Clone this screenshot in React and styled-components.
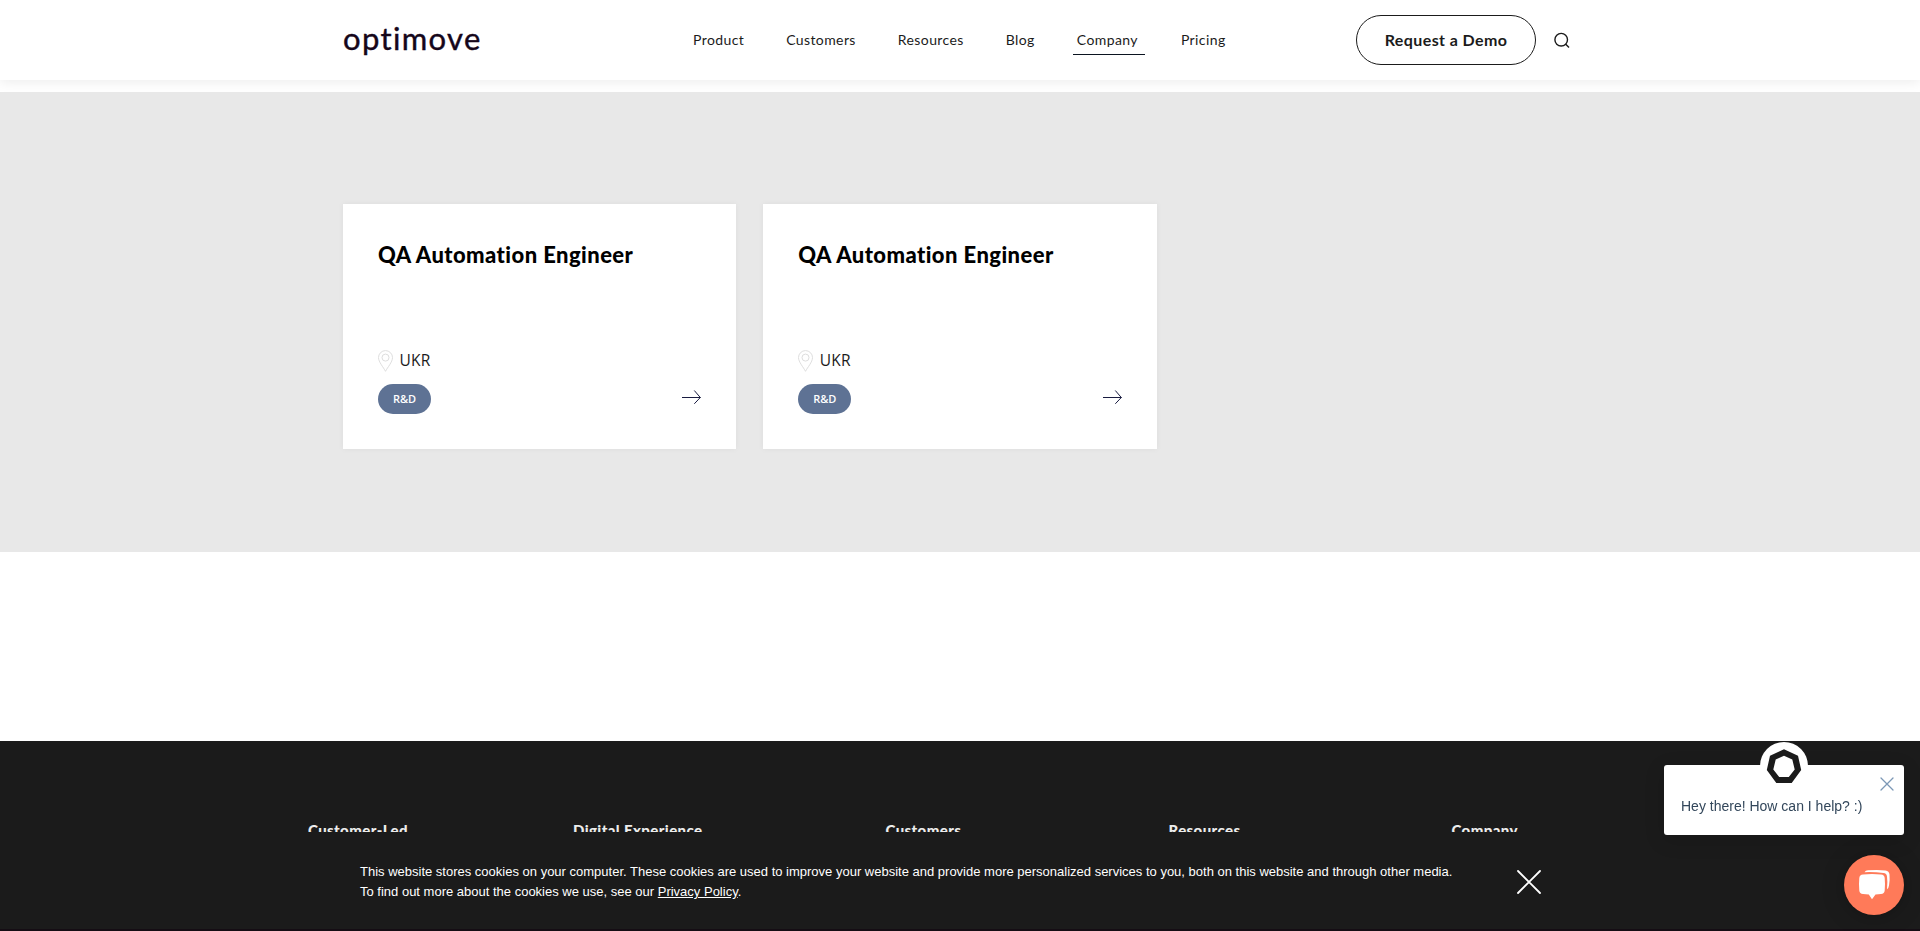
import React from "react";
import styled, { createGlobalStyle } from "styled-components";

const Global = createGlobalStyle`
  *, *::before, *::after { box-sizing: border-box; }
  html, body { margin: 0; padding: 0; overflow: hidden; }
  body { background: #fff; font-family: Lato, "Liberation Sans", sans-serif; color: #1b1b1b; }
  a { color: inherit; text-decoration: none; }
  button { font: inherit; color: inherit; background: none; border: 0; padding: 0; }
  h2, h3, p { margin: 0; }
  svg { display: block; flex: none; }
`;

const Page = styled.div`
  height: 931px;
  overflow: hidden;
  display: flex;
  flex-direction: column;
`;

const Header = styled.header`
  flex: none;
  height: 80px;
  margin-bottom: 12px;
  padding: 0 343px;
  display: flex;
  align-items: center;
  background: #fff;
  box-shadow: 0 2px 12px rgba(0, 0, 0, 0.08);
`;

const Logo = styled.a`
  width: 346px;
  padding-bottom: 4px;
  font-size: 31px;
  line-height: 40px;
  letter-spacing: 1.35px;
  color: #15061a;
  -webkit-text-stroke: 0.4px #15061a;
`;

const Nav = styled.nav`
  flex: 1;
  display: flex;
  gap: 34px;
`;

const NavLink = styled.a`
  padding: 0 ${(p) => (p.$active ? 7 : 4)}px 0 4px;
  margin-right: ${(p) => (p.$active ? -2 : 0)}px;
  height: 30px;
  line-height: 29px;
  font-size: 14px;
  letter-spacing: 0.4px;
  border-bottom: 1px solid ${(p) => (p.$active ? "#0b1420" : "transparent")};
  white-space: nowrap;
`;

const DemoButton = styled.button`
  width: 180px;
  height: 50px;
  padding-bottom: 2px;
  border: 1px solid #1b1b1b;
  border-radius: 25px;
  font-size: 16px;
  font-weight: 700;
  letter-spacing: 0.4px;
  margin-right: 18px;
`;

const SearchButton = styled.button`
  width: 23px;
`;

const Jobs = styled.main`
  flex: none;
  height: 460px;
  padding: 112px 343px 0;
  background: #e8e8e8;
  display: grid;
  grid-template-columns: repeat(3, 1fr);
  grid-template-rows: 245px;
  column-gap: 27px;
`;

const Card = styled.article`
  padding: 35px;
  background: #fff;
  box-shadow: 0 0 6px rgba(0, 0, 0, 0.05);
  display: flex;
  flex-direction: column;
`;

const JobTitle = styled.h2`
  font-size: 22px;
  line-height: 32px;
  font-weight: 900;
  letter-spacing: 0.43px;
  color: #000;
  flex: 1;
`;

const Place = styled.div`
  display: flex;
  align-items: center;
  gap: 6.5px;
  height: 22px;
  margin-bottom: 12px;
  font-family: "Open Sans", sans-serif;
  font-size: 15.5px;
  line-height: 20px;
`;

const PlaceName = styled.span`
  padding-bottom: 2px;
  letter-spacing: 0.2px;
`;

const CardFoot = styled.div`
  display: flex;
  justify-content: space-between;
  height: 30px;
`;

const Tag = styled.span`
  width: 53px;
  height: 30px;
  border-radius: 15px;
  background: #5e7294;
  color: #fff;
  font-family: "Open Sans", sans-serif;
  font-size: 11px;
  font-weight: 600;
  line-height: 30px;
  text-align: center;
`;

const Arrow = styled.a`
  padding-top: 6px;
`;

const Footer = styled.footer`
  flex: 1;
  margin-top: 189px;
  padding: 79px 0 0 308px;
  background: #1b1b1b;
  display: flex;
`;

const FooterHeading = styled.h3`
  flex: none;
  width: ${(p) => p.$width}px;
  color: #ececec;
  font-size: 15px;
  font-weight: 900;
  line-height: 20px;
  letter-spacing: 0.4px;
  white-space: nowrap;
`;

const CookieBar = styled.section`
  position: fixed;
  inset: auto 0 0 0;
  height: 99px;
  padding: 30px 379px 0 360px;
  display: flex;
  justify-content: space-between;
  background: #1b1b1b;
  border-bottom: 2px solid #150d14;
  color: #fff;
  font: 13px/20px "Liberation Sans", Arial, sans-serif;
`;

const CookieLine = styled.p`
  white-space: nowrap;
  a { text-decoration: underline; }
`;

const CookieClose = styled.button`
  height: 23px;
  margin-top: 8px;
`;

const ChatPopup = styled.aside`
  position: fixed;
  right: 16px;
  bottom: 96px;
  width: 240px;
  height: 70px;
  padding: 31px 17px 0;
  border-radius: 3px;
  background: #fff;
  color: #33475b;
  font: 14px/20px "Liberation Sans", Arial, sans-serif;
  box-shadow: 0 5px 20px rgba(0, 0, 0, 0.15);
`;

const Avatar = styled.span`
  position: absolute;
  left: 96px;
  top: -23px;
  width: 48px;
  height: 48px;
  border-radius: 50%;
  background: #fff;
`;

const PopupClose = styled.button`
  position: absolute;
  right: 10.5px;
  top: 11.5px;
`;

const ChatButton = styled.button`
  position: fixed;
  right: 16px;
  bottom: 16px;
  width: 60px;
  height: 60px;
  border-radius: 50%;
  background: #ff7a59;
  box-shadow: 0 1px 6px rgba(0, 0, 0, 0.1), 0 2px 24px rgba(0, 0, 0, 0.2);
`;

const Cross = ({ size, color, width }) => (
  <svg width={size} height={size} viewBox={`0 0 ${size} ${size}`} stroke={color} strokeWidth={width} strokeLinecap="round">
    <path d={`M1 1L${size - 1} ${size - 1}M${size - 1} 1L1 ${size - 1}`} />
  </svg>
);

const SearchIcon = () => (
  <svg width="16" height="16" viewBox="0 0 16 16" fill="none" stroke="#1b1b1b" strokeWidth="1.4">
    <circle cx="7.2" cy="7.7" r="6.3" />
    <path d="M11.5 12L15 15.500" />
  </svg>
);

const PinIcon = () => (
  <svg width="15" height="22" viewBox="0 0 15 22" fill="none" stroke="#dedede">
    <path d="M7.5 21.3C5.5 17.4 .5 12 .5 7.6a7 7 0 0 1 14 0c0 4.4-5 9.8-7 13.7z" />
    <circle cx="7.5" cy="7.6" r="3.5" />
  </svg>
);

const ArrowIcon = () => (
  <svg width="19" height="14" viewBox="0 0 19 14" fill="none" stroke="#191c40">
    <path d="M0 7.500h18.500M12.300 .5l6 7L12.300 13.800" />
  </svg>
);

const HeptagonIcon = () => (
  <svg width="48" height="48" viewBox="0 0 48 48" fill="#1b1b1b" fillRule="evenodd">
    <path d="M24 7.300L38 13.700L41.200 28L31.700 41H16.300L6.800 28L10 13.700zM24 13.800L15.700 17.500L13.300 27.500L19.200 35H28.800L34.700 27.500L32.300 17.500z" />
  </svg>
);

const ChatIcon = () => (
  <svg width="60" height="60" viewBox="0 0 60 60" fill="#fff">
    <path d="M19 19.5Q28 18.6 37 19.5Q40.400 19.800 40.700 23Q41.300 29 40.700 35.500Q40.400 38.600 37 39L31.500 39.500L28 44.200L24.800 39.500L19 39Q15.600 38.600 15.300 35.500Q14.700 29 15.300 23Q15.600 19.800 19 19.500z" />
    <path d="M20.500 17.200Q21.500 15.500 24 15.300Q34 14.600 41.500 15.400Q45.200 15.800 45.500 19.500Q46 25 45 30.500Q44.700 33 43 34.300Q43.800 27 43 21.500Q42.600 18.300 39.500 18Q30 16.800 20.500 17.200z" />
  </svg>
);

const links = [
  { label: "Product" },
  { label: "Customers" },
  { label: "Resources" },
  { label: "Blog" },
  { label: "Company", active: true },
  { label: "Pricing" },
];

const columns = [
  { label: "Customer-Led", width: 265 },
  { label: "Digital Experience", width: 312.5 },
  { label: "Customers", width: 283 },
  { label: "Resources", width: 283 },
  { label: "Company", width: 100 },
];

const JobCard = ({ title, place, team }) => (
  <Card>
    <JobTitle>{title}</JobTitle>
    <Place><PinIcon /><PlaceName>{place}</PlaceName></Place>
    <CardFoot>
      <Tag>{team}</Tag>
      <Arrow><ArrowIcon /></Arrow>
    </CardFoot>
  </Card>
);

export default function App() {
  return (
    <Page>
      <Global />
      <Header>
        <Logo>optimove</Logo>
        <Nav>
          {links.map((l) => (
            <NavLink key={l.label} $active={l.active}>{l.label}</NavLink>
          ))}
        </Nav>
        <DemoButton>Request a Demo</DemoButton>
        <SearchButton aria-label="Search"><SearchIcon /></SearchButton>
      </Header>
      <Jobs>
        <JobCard title="QA Automation Engineer" place="UKR" team="R&D" />
        <JobCard title="QA Automation Engineer" place="UKR" team="R&D" />
      </Jobs>
      <Footer>
        {columns.map((c) => (
          <FooterHeading key={c.label} $width={c.width}>{c.label}</FooterHeading>
        ))}
      </Footer>
      <CookieBar>
        <div>
          <CookieLine>This website stores cookies on your computer. These cookies are used to improve your website and provide more personalized services to you, both on this website and through other media.</CookieLine>
          <CookieLine>To find out more about the cookies we use, see our <a>Privacy Policy</a>.</CookieLine>
        </div>
        <CookieClose aria-label="Close"><Cross size={24} color="#fff" width={1.8} /></CookieClose>
      </CookieBar>
      <ChatPopup>
        Hey there! How can I help? :)
        <Avatar><HeptagonIcon /></Avatar>
        <PopupClose aria-label="Dismiss"><Cross size={14} color="#7c98b6" width={1.3} /></PopupClose>
      </ChatPopup>
      <ChatButton aria-label="Chat"><ChatIcon /></ChatButton>
    </Page>
  );
}
